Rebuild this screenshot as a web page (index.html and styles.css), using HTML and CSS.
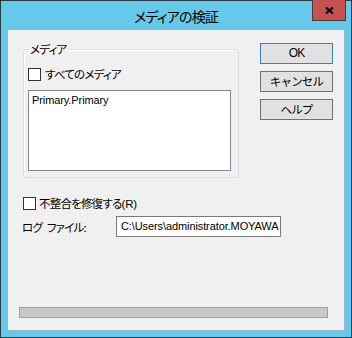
FILE: index.html
```html
<!DOCTYPE html>
<html>
<head>
    <title>メディアの検証</title>
    <link rel="stylesheet" href="styles.css">
</head>
<body>
    <div class="window">
        <!-- タイトルバー -->
        <div class="titlebar">
            <span></span>
            <span class="title">メディアの検証</span>
            <button class="btn-close">
                <svg width="9" height="7" viewBox="0 0 9 7">
                    <path d="M1 0.5 L8 6.5 M8 0.5 L1 6.5" stroke="#000" stroke-width="2" fill="none"/>
                </svg>
            </button>
        </div>

        <div class="client">
            <div class="top-row">
                <!-- メディア -->
                <fieldset class="group">
                    <legend>メディア</legend>
                    <label class="check"><span class="box"></span><span>すべてのメディア</span></label>
                    <div class="listbox latin">Primary.Primary</div>
                </fieldset>

                <div class="buttons">
                    <button class="btn btn-default latin">OK</button>
                    <button class="btn">キャンセル</button>
                    <button class="btn">ヘルプ</button>
                </div>
            </div>

            <label class="check repair"><span class="box"></span><span>不整合を修復する<span class="latin">(R)</span></span></label>

            <div class="log-row">
                <span class="log-label">ログ ファイル:</span>
                <div class="textbox latin">C:\Users\administrator.MOYAWA</div>
            </div>

            <div class="progress"></div>
        </div>
    </div>
</body>
</html>
```

FILE: styles.css
```css
body {
    margin: 0;
    font-family: "Noto Sans CJK JP", sans-serif;
    font-feature-settings: "palt";
    font-size: 11.5px;
    letter-spacing: -0.8px;
    color: #000;
}
.latin {
    font-family: "Liberation Sans", "Noto Sans CJK JP", sans-serif;
    font-size: 11px;
    letter-spacing: -0.1px;
}
.window {
    width: 352px;
    height: 338px;
    box-sizing: border-box;
    border: 1px solid #2b3a42;
    background-color: #67c9ea;
}
.titlebar {
    height: 29px;
    display: grid;
    grid-template-columns: 1fr auto 1fr;
    align-items: start;
}
.title {
    font-size: 14px;
    line-height: 30px;
    letter-spacing: -0.8px;
}
.btn-close {
    justify-self: end;
    margin-right: 5px;
    width: 34px;
    height: 21px;
    margin-top: -1px;
    padding: 0;
    border: 1px solid #3d3d3d;
    border-top: none;
    background-color: #c75050;
    display: flex;
    align-items: center;
    justify-content: center;
}
.client {
    margin: 0 7px;
    height: 300px;
    background-color: #f0f0f0;
    box-shadow: 1px 1px 0 #9ab9c8;
}
.top-row {
    display: grid;
    grid-template-columns: 216px 73px;
    column-gap: 21px;
    align-items: start;
    padding: 12px 0 0 15px;
}
.group {
    margin: 0;
    padding: 11px 7px 6px 4px;
    border: 1px solid #d5dfe5;
    border-radius: 3px;
    box-shadow: inset 1px 1px 0 #fff;
    min-width: 0;
}
.group legend {
    padding: 0 2px;
    margin-left: 0;
    line-height: 14px;
}
.check {
    display: flex;
    align-items: center;
    gap: 3px;
    height: 15px;
    line-height: 15px;
}
.box {
    width: 11px;
    height: 11px;
    margin-right: 1px;
    border: 1px solid #333;
    background-color: #fff;
}
.listbox {
    margin-top: 8px;
    height: 81px;
    box-sizing: border-box;
    border: 1px solid #828790;
    background-color: #fff;
    padding: 1px 3px;
    line-height: 16px;
}
.buttons {
    display: flex;
    flex-direction: column;
    gap: 7px;
    margin-top: 1px;
}
.btn {
    height: 21px;
    padding: 0;
    border: 1px solid #707070;
    background-color: #e1e1e1;
    font-family: inherit;
    font-size: inherit;
    letter-spacing: inherit;
    line-height: 19px;
}
.btn.latin {
    font-family: "Liberation Sans", sans-serif;
    font-size: 12px;
}
.btn-default {
    border-color: #3c7fb1;
}
.repair {
    margin: 18px 0 0 15px;
    gap: 2px;
}
.repair .latin {
    font-size: 11.5px;
}
.log-row {
    display: flex;
    align-items: center;
    margin-top: 5px;
    padding-left: 14px;
}
.log-label {
    width: 94px;
    word-spacing: 3px;
}
.textbox {
    width: 165px;
    height: 21px;
    box-sizing: border-box;
    border: 1px solid #7a7a7a;
    background-color: #fff;
    padding: 0 4px;
    line-height: 19px;
    white-space: nowrap;
    overflow: hidden;
}
.progress {
    margin: 70px 0 0 11px;
    width: 309px;
    height: 11px;
    box-sizing: border-box;
    border: 1px solid #a0a0a0;
    background-color: #c8c8c8;
}
```
